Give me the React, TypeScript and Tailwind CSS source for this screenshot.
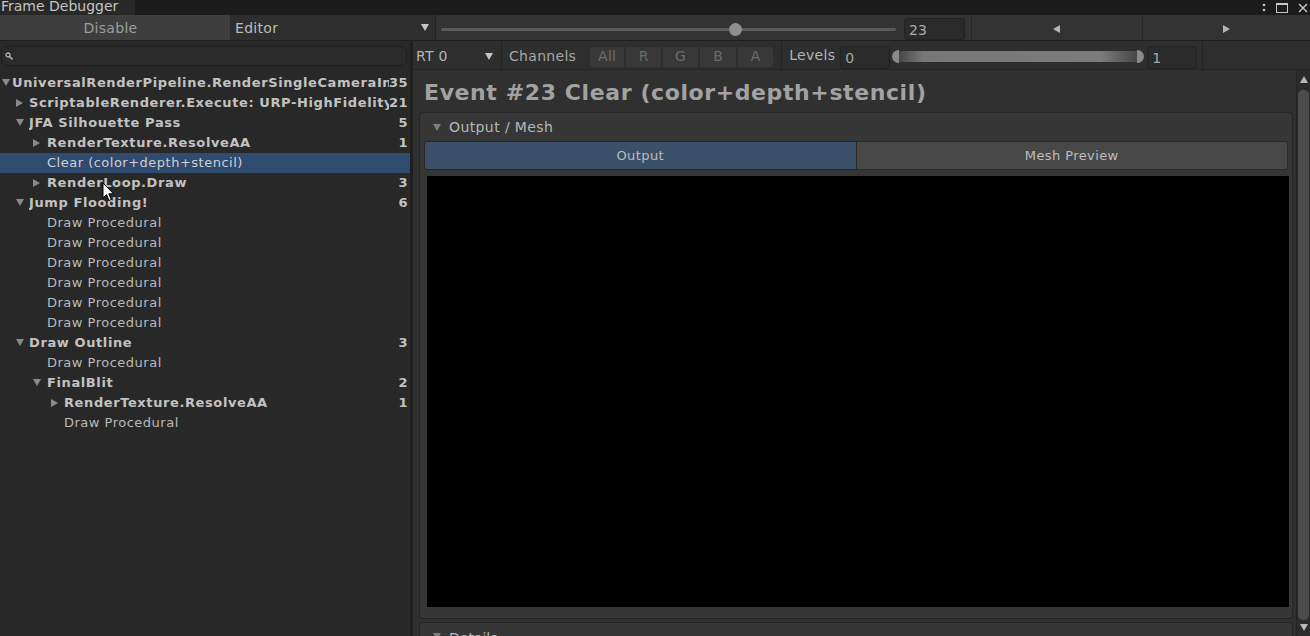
import React from 'react';

type Node = { label: string; level: number; bold?: boolean; arrow?: 'down' | 'right'; count?: string; selected?: boolean };

const tree: Node[] = [
  { label: 'UniversalRenderPipeline.RenderSingleCameraInternal', level: 0, bold: true, arrow: 'down', count: '35' },
  { label: 'ScriptableRenderer.Execute: URP-HighFidelity-Renderer', level: 1, bold: true, arrow: 'right', count: '21' },
  { label: 'JFA Silhouette Pass', level: 1, bold: true, arrow: 'down', count: '5' },
  { label: 'RenderTexture.ResolveAA', level: 2, bold: true, arrow: 'right', count: '1' },
  { label: 'Clear (color+depth+stencil)', level: 2, selected: true },
  { label: 'RenderLoop.Draw', level: 2, bold: true, arrow: 'right', count: '3' },
  { label: 'Jump Flooding!', level: 1, bold: true, arrow: 'down', count: '6' },
  { label: 'Draw Procedural', level: 2 },
  { label: 'Draw Procedural', level: 2 },
  { label: 'Draw Procedural', level: 2 },
  { label: 'Draw Procedural', level: 2 },
  { label: 'Draw Procedural', level: 2 },
  { label: 'Draw Procedural', level: 2 },
  { label: 'Draw Outline', level: 1, bold: true, arrow: 'down', count: '3' },
  { label: 'Draw Procedural', level: 2 },
  { label: 'FinalBlit', level: 2, bold: true, arrow: 'down', count: '2' },
  { label: 'RenderTexture.ResolveAA', level: 3, bold: true, arrow: 'right', count: '1' },
  { label: 'Draw Procedural', level: 3 },
];

const indents = ['pl-[12px]', 'pl-[29px]', 'pl-[47px]', 'pl-[64px]'];

function Tri({ dir, className = '' }: { dir: 'down' | 'right' | 'left' | 'up'; className?: string }) {
  const pts = {
    down: '0,0 8,0 4,7',
    right: '0,0 7,4 0,8',
    left: '7,0 0,4 7,8',
    up: '4,0 8,7 0,7',
  }[dir];
  return (
    <svg width="8" height="8" viewBox="0 0 8 8" className={className}>
      <polygon points={pts} fill="currentColor" />
    </svg>
  );
}

function TreeRow({ n }: { n: Node }) {
  return (
    <div
      className={`relative flex items-center h-[20px] pr-[2px] ${indents[n.level]} ${n.selected ? 'bg-[#2f4b70]' : ''}`}
    >
      {n.arrow && (
        <span className="absolute text-[#8a8a8a]" style={{ left: [2, 16, 33, 51][n.level], top: 6 }}>
          <Tri dir={n.arrow} />
        </span>
      )}
      <span
        className={`flex-1 min-w-0 overflow-hidden whitespace-nowrap text-[13px] ${
          n.bold ? 'font-bold tracking-[0.6px] text-[#c2c2c2]' : n.selected ? 'tracking-[0.5px] text-[#d0d0d0]' : 'tracking-[0.5px] text-[#bababa]'
        }`}
      >
        {n.label}
      </span>
      {n.count && <span className="shrink-0 text-[13px] font-bold tracking-[0.5px] text-[#c2c2c2]">{n.count}</span>}
    </div>
  );
}

export default function App() {
  return (
    <div className="w-[1310px] h-[636px] overflow-hidden flex flex-col bg-[#282828] font-['DejaVu_Sans',sans-serif] select-none relative">
      {/* Title strip */}
      <div className="h-[15px] flex bg-[#1c1c1c] shrink-0">
        <div className="w-[135px] bg-[#282828] text-[14px] leading-[13px] text-[#c4c4c4] pl-[1px] overflow-hidden">Frame Debugger</div>
        <div className="flex-1" />
        <div className="flex items-center gap-[10px] pr-[2px] text-[#c8c8c8]">
          <svg width="4" height="10" viewBox="0 0 4 10"><circle cx="2" cy="2" r="1.3" fill="currentColor" /><circle cx="2" cy="7" r="1.3" fill="currentColor" /></svg>
          <svg width="12" height="10" viewBox="0 0 12 10"><rect x="0.5" y="0.5" width="11" height="9" fill="none" stroke="currentColor" /><line x1="0" y1="1.5" x2="12" y2="1.5" stroke="currentColor" /></svg>
          <svg width="10" height="10" viewBox="0 0 10 10"><path d="M1 1 L9 9 M9 1 L1 9" stroke="currentColor" strokeWidth="1.4" /></svg>
        </div>
      </div>

      {/* Main toolbar */}
      <div className="h-[26px] flex shrink-0 bg-[#333333] border-b border-[#1f1f1f]">
        <div className="w-[231px] flex items-center justify-center pr-[9px] pt-[1px] bg-[#3e3e3e] border-r border-[#2a2a2a] text-[14px] tracking-[0.3px] text-[#9c9c9c]">Disable</div>
        <div className="w-[205px] flex items-center justify-between pl-[4px] pr-[6px] pt-[1px] bg-[#2e2e2e] border-r border-[#242424] text-[14px] tracking-[0.3px] text-[#bdbdbd]">
          <span>Editor</span>
          <Tri dir="down" className="text-[#c4c4c4]" />
        </div>
        <div className="w-[468px] flex items-center pl-[5px] pr-[8px] pt-[4px]">
          <div className="relative flex-1 h-[3px] bg-[#5a5a5a] rounded">
            <div className="absolute left-[288px] top-[-5px] w-[13px] h-[13px] rounded-full bg-[#8e8e8e]" />
          </div>
        </div>
        <div className="w-[62px] flex items-center">
          <div className="w-[61px] h-[22px] mt-[3px] rounded-[3px] bg-[#2a2a2a] border border-[#222] text-[14px] text-[#aaa] pl-[4px] leading-[22px]">23</div>
        </div>
        <div className="w-[6px] border-r border-[#262626]" />
        <div className="w-[171px] flex items-center justify-center pt-[3px] border-r border-[#262626] text-[#b4b4b4]">
          <Tri dir="left" />
        </div>
        <div className="flex-1 flex items-center justify-center pt-[3px] text-[#b4b4b4]">
          <Tri dir="right" />
        </div>
      </div>

      <div className="flex-1 flex min-h-0">
        {/* Left: event tree */}
        <div className="w-[413px] flex flex-col bg-[#282828] border-r-[3px] border-[#1f1f1f] shrink-0">
          <div className="h-[29px] flex items-center pl-[1px] pr-[3px]">
            <div className="flex-1 h-[20px] rounded-[6px] bg-[#2a2a2a] border border-[#1e1e1e] flex items-center pl-[3px]">
              <svg width="8" height="8" viewBox="0 0 8 8" className="text-[#b0b0b0]">
                <circle cx="3" cy="3" r="2" fill="none" stroke="currentColor" strokeWidth="1.3" />
                <line x1="4.5" y1="4.5" x2="7.5" y2="7.5" stroke="currentColor" strokeWidth="1.6" />
              </svg>
            </div>
          </div>
          <div className="flex flex-col pt-[3px]">
            {tree.map((n, i) => (
              <TreeRow key={i} n={n} />
            ))}
          </div>
        </div>

        {/* Right: details */}
        <div className="flex-1 flex flex-col min-w-0 bg-[#303030]">
          <div className="h-[29px] flex items-center shrink-0 bg-[#2e2e2e] border-b border-[#242424] text-[14px] tracking-[0.3px]">
            <div className="w-[89px] h-full flex items-center justify-between pl-[3px] pr-[8px] pt-[3px] border-r border-[#232323] text-[#b4b4b4]">
              <span>RT 0</span>
              <Tri dir="down" className="text-[#c4c4c4]" />
            </div>
            <span className="ml-[7px] mt-[3px] text-[#a6a6a6]">Channels</span>
            <div className="ml-[14px] mt-[3px] flex gap-[2px] text-[#6c6c6c]">
              {[['All', 'w-[34px] rounded-l-[3px]'], ['R', 'w-[35px]'], ['G', 'w-[35px]'], ['B', 'w-[36px]'], ['A', 'w-[35px] rounded-r-[3px]']].map(([l, c]) => (
                <div key={l} className={`h-[20px] flex items-center justify-center bg-[#383838] ${c}`}>{l}</div>
              ))}
            </div>
            <div className="ml-[8px] h-full border-l border-[#232323]" />
            <span className="ml-[7px] mt-[1px] text-[#b4b4b4]">Levels</span>
            <div className="ml-[5px] w-[50px] h-[23px] mt-[4px] rounded-[3px] bg-[#2a2a2a] border border-[#222] pl-[4px] leading-[23px] text-[#a8a8a8]">0</div>
            <div className="ml-[2px] w-[252px] h-[13px] mt-[3px] flex items-center">
              <div className="w-[7px] h-[13px] rounded-l-full bg-[#8a8a8a]" />
              <div className="flex-1 h-[11px] bg-[linear-gradient(90deg,#474747_0%,#777777_10%,#7b7b7b_85%,#474747_100%)]" />
              <div className="w-[7px] h-[13px] rounded-r-full bg-[#8a8a8a]" />
            </div>
            <div className="ml-[3px] w-[50px] h-[23px] mt-[4px] rounded-[3px] bg-[#2a2a2a] border border-[#222] pl-[4px] leading-[23px] text-[#a8a8a8]">1</div>
            <div className="ml-[5px] h-full border-l border-[#232323]" />
          </div>

          <div className="flex-1 flex min-h-0">
            <div className="flex-1 flex flex-col min-w-0 pl-[6px] pr-[3px] overflow-hidden">
              <div className="h-[42px] shrink-0 flex items-center pl-[5px] text-[22px] font-bold tracking-[0.6px] text-[#a2a2a2] leading-none pt-[3px]">
                Event #23 Clear (color+depth+stencil)
              </div>
              <div className="shrink-0 h-[507px] rounded-[4px] bg-[#363636] border border-[#252525] flex flex-col px-[4px]">
                <div className="h-[28px] flex items-center gap-[8px] pl-[9px] pt-[1px] text-[14px] tracking-[0.4px] text-[#b8b8b8]">
                  <Tri dir="down" className="text-[#7e7e7e]" />
                  <span>Output / Mesh</span>
                </div>
                <div className="h-[29px] flex text-[13px] tracking-[0.4px]">
                  <div className="flex-1 flex items-center justify-center rounded-l-[3px] bg-[#3a5068] border border-[#262626] text-[#bdbdbd]">Output</div>
                  <div className="flex-1 flex items-center justify-center rounded-r-[3px] bg-[#474747] border border-l-0 border-[#2b2b2b] text-[#bdbdbd]">Mesh Preview</div>
                </div>
                <div className="mt-[6px] ml-[3px] mr-[-1px] h-[431px] bg-black" />
              </div>
              <div className="mt-[3px] shrink-0 h-[40px] rounded-[4px] bg-[#363636] border border-[#252525] flex items-start pl-[13px] pt-[5px] gap-[8px] text-[14px] text-[#b8b8b8]">
                <Tri dir="down" className="text-[#7e7e7e] mt-[5px]" />
                <span>Details</span>
              </div>
            </div>
            {/* Scrollbar */}
            <div className="w-[14px] shrink-0 flex flex-col items-center bg-[#2b2b2b] border-l border-[#232323] pt-[6px]">
              <Tri dir="up" className="text-[#b8b8b8]" />
              <div className="mt-[6px] w-[11px] flex-1 rounded-[5px] bg-[#4c4c4c]" />
              <Tri dir="down" className="text-[#b8b8b8] my-[4px]" />
            </div>
          </div>
        </div>
      </div>

      {/* Mouse cursor */}
      <svg className="absolute left-[102px] top-[182px]" width="14" height="20" viewBox="0 0 14 20">
        <path d="M1 1 L1 16 L4.5 12.5 L7 18.5 L9.3 17.5 L6.8 11.8 L11.5 11.8 Z" fill="#fff" stroke="#000" strokeWidth="1" />
      </svg>
    </div>
  );
}
